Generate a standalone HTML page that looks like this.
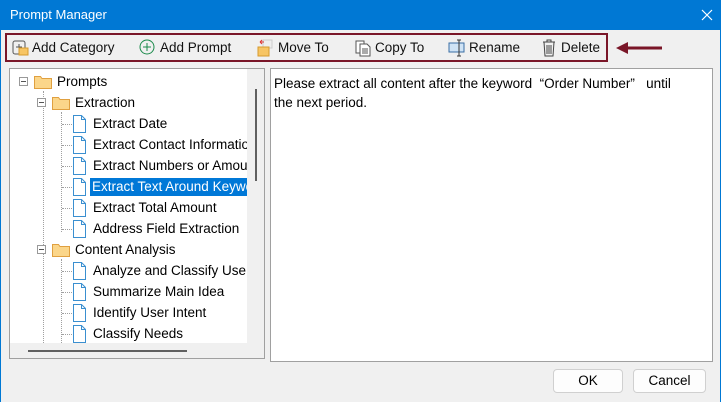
<!DOCTYPE html>
<html><head><meta charset="utf-8"><style>
*{margin:0;padding:0;box-sizing:border-box}
body{width:721px;height:402px;overflow:hidden;background:#f0f0f0;font-family:"Segoe UI","Liberation Sans",sans-serif;font-size:13px;color:#000;position:relative}
.a{position:absolute}
#title{left:0;top:0;width:721px;height:30px;background:#0078d4;color:#fff;font-size:13px;line-height:30px;padding-left:10px}
#lb{left:0;top:30px;width:1px;height:372px;background:#0078d4}
#rb{right:0;top:30px;width:1px;height:372px;background:#0078d4}
#box{left:5px;top:33px;width:603px;height:29px;border:2px solid #7a1628}
.tb{top:39px;height:18px;line-height:18px;font-size:13.5px;color:#111}
.tb svg{position:absolute;left:0;top:0}
.tb span{position:absolute;white-space:nowrap}
#tree{left:9px;top:68px;width:256px;height:291px;background:#fff;border:1px solid #a0a0a0;overflow:hidden}
#clip{position:absolute;left:0;top:0;width:237px;height:274px;overflow:hidden}
.r{position:absolute;height:18px;line-height:18px;white-space:nowrap;font-size:13.5px}
.sel{background:#0078d7;color:#fff;padding:0 2px}
#vs{left:237px;top:0;width:18px;height:290px;background:#f0f0f0}
#hs{left:0;top:274px;width:246px;height:16px;background:#f0f0f0}
#txt{left:270px;top:68px;width:443px;height:294px;background:#fff;border:1px solid #a0a0a0;padding:5px 3px;line-height:19px;font-size:13.5px;white-space:nowrap}
.btn{top:369px;height:24px;background:#fdfdfd;border:1px solid #d0d0d0;border-radius:4px;text-align:center;line-height:22px;font-size:13.5px}
.dl{position:absolute;border-left:1px dotted #a0a0a0}
.dh{position:absolute;border-top:1px dotted #a0a0a0;width:10px}
</style></head><body>
<div id="title" class="a">Prompt Manager</div>
<svg class="a" style="left:701px;top:9px" width="12" height="12"><path d="M1 1L11 11M11 1L1 11" stroke="#fff" stroke-width="1.2"/></svg>
<div id="lb" class="a"></div><div id="rb" class="a"></div>
<div id="box" class="a"></div>
<div class="a tb" style="left:12px"><svg width="18" height="18"><rect x="1" y="2" width="12" height="13" rx="2" fill="none" stroke="#555"/><path d="M7 5v6M4 8h6" stroke="#555"/><rect x="7" y="9" width="9" height="7" fill="#f7c564" stroke="#d69a2e"/></svg><span style="left:20px">Add Category</span></div>
<div class="a tb" style="left:139px"><svg width="18" height="18"><circle cx="8" cy="8" r="7" fill="none" stroke="#1a8a4a"/><path d="M8 4v8M4 8h8" stroke="#1a8a4a"/></svg><span style="left:21px">Add Prompt</span></div>
<div class="a tb" style="left:257px"><svg width="18" height="18"><rect x="6" y="1" width="9" height="8" fill="#eee" stroke="#ccc"/><path d="M3 3h4M3 3l2-2M3 3l2 2" stroke="#d33" fill="none"/><rect x="1" y="8" width="11" height="9" fill="#f7c564" stroke="#d69a2e"/></svg><span style="left:21px">Move To</span></div>
<div class="a tb" style="left:355px"><svg width="18" height="18"><path d="M1 2h8v12H1z" fill="#fff" stroke="#555"/><path d="M5 5h7l3 3v9H5z" fill="#fff" stroke="#555"/><path d="M7 10h6M7 12h6M7 14h6" stroke="#555"/></svg><span style="left:20px">Copy To</span></div>
<div class="a tb" style="left:448px"><svg width="18" height="18"><rect x="1" y="4" width="15" height="9" fill="#cfe3f5" stroke="#3a6ea5"/><path d="M11 1v16M9 1h4M9 17h4" stroke="#333"/></svg><span style="left:21px">Rename</span></div>
<div class="a tb" style="left:541px"><svg width="18" height="18"><path d="M2 3h12M6 3V1h4v2M3 3l1 14h8l1-14M6 6v9M8 6v9M10 6v9" stroke="#444" fill="none"/></svg><span style="left:20px">Delete</span></div>
<svg class="a" style="left:616px;top:42px" width="48" height="12"><path d="M46 6H8" stroke="#7a1628" stroke-width="3"/><path d="M0 6L12 0V12Z" fill="#7a1628"/></svg>
<div id="tree" class="a">
<div id="clip">
<div class="dl" style="left:33px;top:22px;height:252px"></div>
<div class="dl" style="left:51px;top:43px;height:120px"></div>
<div class="dl" style="left:51px;top:190px;height:84px"></div>
<svg class="a" style="left:9px;top:8px" width="9" height="9"><rect x=".5" y=".5" width="8" height="8" fill="#fff" stroke="#999"/><path d="M2 4.5h5" stroke="#555"/></svg>
<svg class="a" style="left:27px;top:29px" width="9" height="9"><rect x=".5" y=".5" width="8" height="8" fill="#fff" stroke="#999"/><path d="M2 4.5h5" stroke="#555"/></svg>
<svg class="a" style="left:27px;top:176px" width="9" height="9"><rect x=".5" y=".5" width="8" height="8" fill="#fff" stroke="#999"/><path d="M2 4.5h5" stroke="#555"/></svg>
<svg class="a" style="left:24px;top:5px" width="18" height="15"><path d="M.5 2.5h6l1.5 2h9.5v10H.5z" fill="#fbd68a" stroke="#e0a040"/></svg>
<div class="r" style="left:47px;top:4px">Prompts</div>
<svg class="a" style="left:42px;top:26px" width="18" height="15"><path d="M.5 2.5h6l1.5 2h9.5v10H.5z" fill="#fbd68a" stroke="#e0a040"/></svg>
<div class="r" style="left:65px;top:25px">Extraction</div>
<svg class="a" style="left:42px;top:173px" width="18" height="15"><path d="M.5 2.5h6l1.5 2h9.5v10H.5z" fill="#fbd68a" stroke="#e0a040"/></svg>
<div class="r" style="left:65px;top:172px">Content Analysis</div>
<div id="items"></div>
</div>
<div id="vs" class="a"><div class="a" style="left:8px;top:20px;width:2px;height:92px;background:#606060"></div></div>
<div id="hs" class="a"><div class="a" style="left:18px;top:7px;width:159px;height:2px;background:#606060"></div></div>
</div>
<div id="txt" class="a">Please extract all content after the keyword &nbsp;“Order Number” &nbsp; until<br>the next period.</div>
<div class="a btn" style="left:553px;width:70px">OK</div>
<div class="a btn" style="left:633px;width:73px">Cancel</div>
<script>
var it=[["Extract Date",46],["Extract Contact Information",67],["Extract Numbers or Amounts",88],["Extract Text Around Keyword",109,1],["Extract Total Amount",130],["Address Field Extraction",151],["Analyze and Classify User Needs",193],["Summarize Main Idea",214],["Identify User Intent",235],["Classify Needs",256]];
var h="";it.forEach(function(a){var y=a[1];
h+='<div class="dh" style="left:52px;top:'+(y+9)+'px"></div><svg class="a" style="left:63px;top:'+y+'px" width="14" height="18"><path d="M.5 .5h8l4 4v13H.5z" fill="#fff" stroke="#3a8fd0"/><path d="M8.5 .5v4h4" fill="none" stroke="#3a8fd0"/></svg>';
h+='<div class="r'+(a[2]?' sel':'')+'" style="left:'+(a[2]?80:83)+'px;top:'+y+'px">'+a[0]+'</div>';});
document.getElementById("items").innerHTML=h;
</script>
</body></html>
